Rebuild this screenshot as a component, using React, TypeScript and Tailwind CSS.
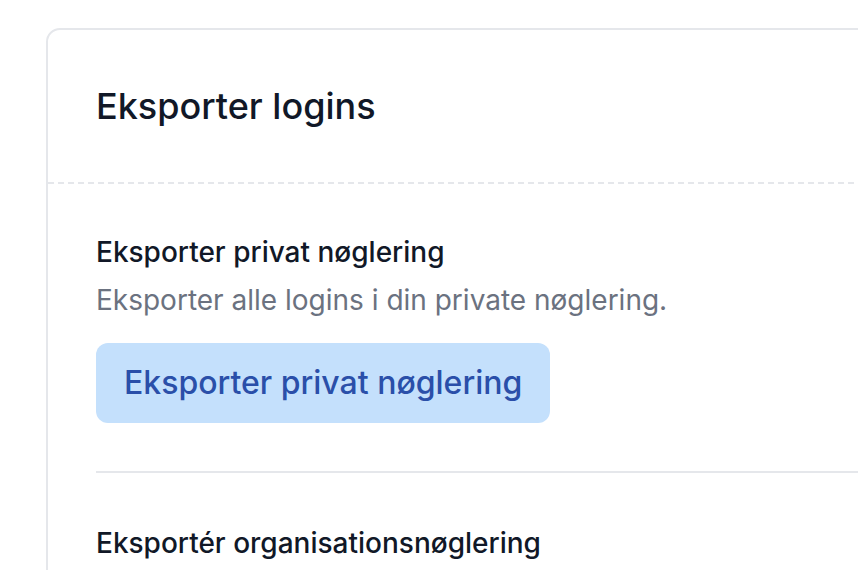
export default function App() {
  return (
    <div className="h-[570px] w-[858px] overflow-hidden bg-white font-['Inter','Noto_Sans',sans-serif] text-[#111827]">
      <div className="ml-[46px] mt-[28px] w-[900px] rounded-[14px] border-2 border-[#e5e7eb] bg-white">
        <div className="border-b-2 border-dashed border-[#e5e7eb] px-[48px] py-[48px]">
          <h1 className="text-[36px] font-medium leading-[56px]">Eksporter logins</h1>
        </div>
        <div className="px-[48px]">
          <section className="border-b-2 border-[#e5e7eb] py-[48px]">
            <h2 className="text-[28px] font-[450] leading-[40px]">Eksporter privat nøglering</h2>
            <p className="mt-[8px] text-[28px] leading-[40px] text-[#6b7280]">
              Eksporter alle logins i din private nøglering.
            </p>
            <button className="mt-[23px] flex h-[80px] items-center rounded-[12px] bg-[#c4e0fc] px-[28px] text-[32px] font-medium text-[#2a4fa9]">
              Eksporter privat nøglering
            </button>
          </section>
          <section className="pb-[48px] pt-[50px]">
            <h2 className="text-[28px] font-[450] leading-[40px]">Eksportér organisationsnøglering</h2>
          </section>
        </div>
      </div>
    </div>
  );
}
